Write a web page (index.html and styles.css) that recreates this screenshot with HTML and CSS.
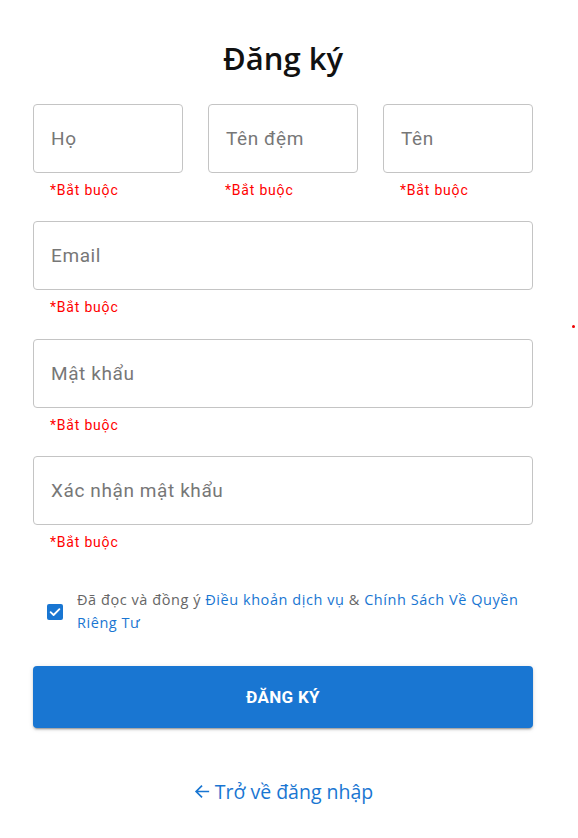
FILE: index.html
```html
<!DOCTYPE html>
<html lang="vi">
<head>
<meta charset="utf-8">
<title>Đăng ký</title>
<link rel="stylesheet" href="styles.css">
</head>
<body>
<div class="page">
  <h1 class="title">Đăng ký</h1>
  <form class="form">
    <div class="row3">
      <div class="field">
        <div class="input"><span class="ph">Họ</span></div>
        <div class="helper">*Bắt buộc</div>
      </div>
      <div class="field">
        <div class="input"><span class="ph">Tên đệm</span></div>
        <div class="helper">*Bắt buộc</div>
      </div>
      <div class="field">
        <div class="input"><span class="ph">Tên</span></div>
        <div class="helper">*Bắt buộc</div>
      </div>
    </div>
    <div class="field">
      <div class="input"><span class="ph">Email</span></div>
      <div class="helper">*Bắt buộc</div>
    </div>
    <div class="field">
      <div class="input"><span class="ph">Mật khẩu</span></div>
      <div class="helper">*Bắt buộc</div>
    </div>
    <div class="field">
      <div class="input"><span class="ph">Xác nhận mật khẩu</span></div>
      <div class="helper">*Bắt buộc</div>
    </div>
    <div class="agree">
      <span class="check">
        <svg viewBox="0 0 16 16" width="16" height="16"><rect x="0" y="0" width="16" height="16" rx="2" fill="#1976d2"/><path d="M3.6 8.2 L6.6 11 L12.4 5.2" fill="none" stroke="#fff" stroke-width="1.8" stroke-linecap="round" stroke-linejoin="round"/></svg>
      </span>
      <p class="agree-text">Đã đọc và đồng ý <a class="lnk">Điều khoản dịch vụ</a> &amp; <a class="lnk">Chính Sách Về Quyền Riêng Tư</a></p>
    </div>
    <button type="button" class="submit">ĐĂNG KÝ</button>
    <a class="back"><svg class="arrow" viewBox="0 0 20 20" width="19" height="19"><path d="M17 10 H3.5 M9.5 3.8 L3.3 10 L9.5 16.2" fill="none" stroke="#1976d2" stroke-width="1.8"/></svg>Trở về đăng nhập</a>
  </form>
  <span class="dot"></span>
</div>
</body>
</html>
```
FILE: styles.css
```css
* { box-sizing: border-box; }
html, body { margin: 0; padding: 0; background: #fff; }
.page {
  position: relative;
  width: 578px;
  min-height: 838px;
  padding-top: 38px;
}
.title {
  margin: 0;
  text-align: center;
  font-family: "Open Sans", "Noto Sans", sans-serif;
  font-weight: 600;
  font-size: 31px;
  line-height: 40px;
  color: #111;
  width: 566px;
}
.form {
  margin: 26px 0 0 33px;
  width: 500px;
  display: flex;
  flex-direction: column;
  gap: 22.3px;
}
.row3 {
  display: grid;
  grid-template-columns: repeat(3, 150px);
  column-gap: 25px;
}
.field { display: flex; flex-direction: column; }
.input {
  height: 69px;
  border: 1px solid #c4c4c4;
  border-radius: 4px;
  display: flex;
  align-items: center;
  padding-left: 17px;
}
.ph {
  font-family: Roboto, "Liberation Sans", sans-serif;
  font-size: 19px;
  letter-spacing: 0.6px;
  color: #777;
}
.helper {
  margin-top: 8px;
  padding-left: 17px;
  font-family: Roboto, "Liberation Sans", sans-serif;
  font-size: 14px;
  line-height: 18px;
  color: #f00;
  letter-spacing: 0.8px;
}
.agree {
  margin-top: 15px;
  display: flex;
  align-items: center;
  padding-left: 14px;
  gap: 14px;
}
.check { display: flex; width: 16px; height: 16px; flex: none; margin-top: 1px; }
.agree-text {
  margin: 0;
  font-family: "Open Sans", "Noto Sans", sans-serif;
  font-size: 14.5px;
  letter-spacing: 0.55px;
  line-height: 23px;
  color: #666;
}
.lnk { color: #1976d2; }
.submit {
  margin-top: 10px;
  height: 62px;
  width: 500px;
  border: none;
  border-radius: 4px;
  background: #1976d2;
  color: #fff;
  font-family: Roboto, "Liberation Sans", sans-serif;
  font-weight: 700;
  font-size: 17px;
  letter-spacing: 0.3px;
  box-shadow: 0 3px 1px -2px rgba(0,0,0,0.2), 0 2px 2px 0 rgba(0,0,0,0.14), 0 1px 5px 0 rgba(0,0,0,0.12);
}
.back {
  margin-top: 27px;
  align-self: center;
  display: flex;
  align-items: center;
  gap: 3px;
  font-family: "Open Sans", "Noto Sans", sans-serif;
  font-size: 19.5px;
  line-height: 28px;
  color: #1976d2;
}
.arrow { flex: none; }
.dot {
  position: absolute;
  left: 572px;
  top: 325px;
  width: 3px;
  height: 3px;
  border-radius: 50%;
  background: #e00;
}
```
